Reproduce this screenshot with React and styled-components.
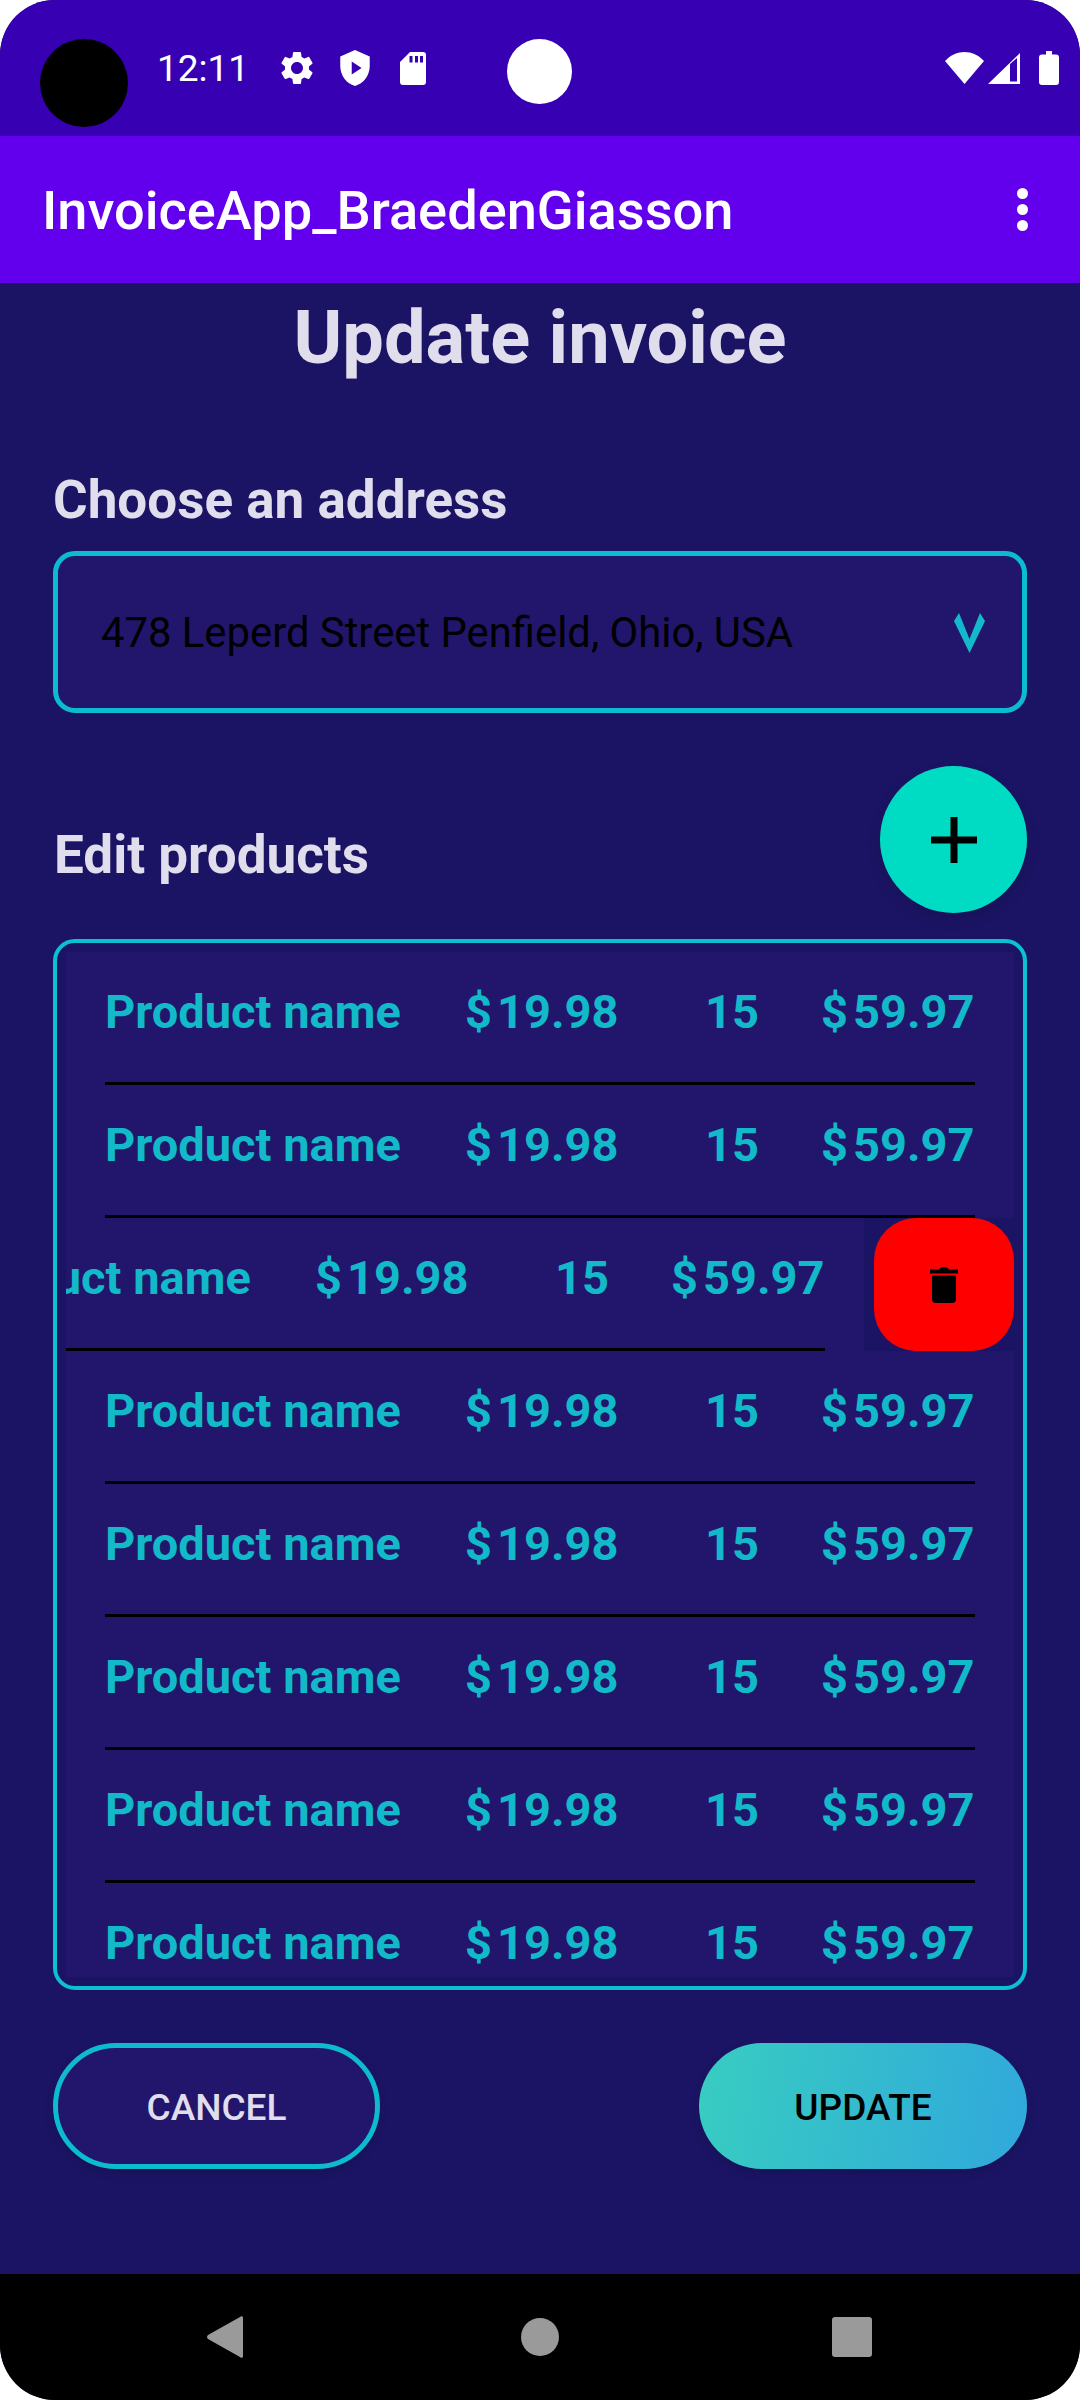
import React from 'react';
import styled, {createGlobalStyle} from 'styled-components';

const GlobalStyle = createGlobalStyle`
  html, body {
    margin: 0;
    background: #fff;
  }
  * {
    box-sizing: border-box;
  }
`;

const products = [0, 0, 150, 0, 0, 0, 0, 0];

const App = () => {
  return (
    <>
      <GlobalStyle/>
      <Screen>
        <StatusBar>
          <Camera/>
          <Blob/>
          <Time>12:11</Time>
          <StatusIcons>
            <svg width="40" height="40" viewBox="0 0 24 24" fill="#fff">
              <path d="M19.14 12.94c.04-.3.06-.61.06-.94 0-.32-.02-.64-.07-.94l2.03-1.58c.18-.14.23-.41.12-.61l-1.92-3.32c-.12-.22-.37-.29-.59-.22l-2.39.96c-.5-.38-1.03-.7-1.62-.94l-.36-2.54c-.04-.24-.24-.41-.48-.41h-3.84c-.24 0-.43.17-.47.41l-.36 2.54c-.59.24-1.13.57-1.62.94l-2.39-.96c-.22-.08-.47 0-.59.22L2.74 8.87c-.12.21-.08.47.12.61l2.03 1.58c-.05.3-.09.63-.09.94s.02.64.07.94l-2.03 1.58c-.18.14-.23.41-.12.61l1.92 3.32c.12.22.37.29.59.22l2.39-.96c.5.38 1.03.7 1.62.94l.36 2.54c.05.24.24.41.48.41h3.84c.24 0 .44-.17.47-.41l.36-2.54c.59-.24 1.13-.56 1.62-.94l2.39.96c.22.08.47 0 .59-.22l1.92-3.32c.12-.22.07-.47-.12-.61l-2.01-1.58zM12 15.6c-1.98 0-3.6-1.62-3.6-3.6s1.62-3.6 3.6-3.6 3.6 1.62 3.6 3.6-1.62 3.6-3.6 3.6z"/>
            </svg>
            <svg width="30" height="36" viewBox="3 1 18 22" fill="#fff">
              <path fillRule="evenodd" d="M12 1 3 5v6c0 5.55 3.84 10.74 9 12 5.16-1.26 9-6.45 9-12V5l-9-4zM10 8l6 4-6 4V8z"/>
            </svg>
            <SdIcon width="26" height="33" viewBox="0 0 26 33" fill="#fff">
              <path fillRule="evenodd" d="M10 0H23a3 3 0 0 1 3 3V30a3 3 0 0 1-3 3H3a3 3 0 0 1-3-3V10L10 0zM9.500 4v6.500h3V4h-3zM15 4v6.500h3V4h-3zM20 4v6.500h3V4h-3z"/>
            </SdIcon>
          </StatusIcons>
          <SystemIcons>
            <svg width="39" height="32" viewBox="0 0 39 32" fill="#fff">
              <path d="M0 9C11-3 28-3 39 9L19.500 32 0 9z"/>
            </svg>
            <svg width="32" height="31" viewBox="0 0 32 31" fill="#fff">
              <path fillRule="evenodd" d="M32 0V31H0L32 0zM29 5 22 11V28.500H29V5z"/>
            </svg>
            <BatteryIcon width="20" height="34" viewBox="0 0 20 34" fill="#fff">
              <path d="M7 0h6v3.500h4a3 3 0 0 1 3 3V31a3 3 0 0 1-3 3H3a3 3 0 0 1-3-3V6.500a3 3 0 0 1 3-3h4V0z"/>
            </BatteryIcon>
          </SystemIcons>
        </StatusBar>

        <AppBar>
          <AppTitle>InvoiceApp_BraedenGiasson</AppTitle>
          <MenuDots>
            <Dot/>
            <Dot/>
            <Dot/>
          </MenuDots>
        </AppBar>

        <Main>
          <PageTitle>Update invoice</PageTitle>

          <AddressLabel>Choose an address</AddressLabel>
          <AddressSelect>
            <AddressText>478 Leperd Street Penfield, Ohio, USA</AddressText>
            <svg width="31" height="40" viewBox="0 0 31 40" fill="#14b8cb">
              <path d="M0 8 5 0 15.500 26 26 0 31 8 15.500 40z"/>
            </svg>
          </AddressSelect>

          <ProductsHeader>
            <ProductsLabel>Edit products</ProductsLabel>
            <AddButton>
              <svg width="46" height="46" viewBox="0 0 46 46" fill="#000">
                <path d="M19.500 0h7v19.500H46v7H26.500V46h-7V26.500H0v-7h19.500z"/>
              </svg>
            </AddButton>
          </ProductsHeader>

          <ProductList>
            <ListInner>
              {products.map((shift, i) => (
                <Row key={i}>
                  <RowBody $shift={shift}>
                    <Cell>Product name</Cell>
                    <Cell><Dollar>$</Dollar>19.98</Cell>
                    <Cell>15</Cell>
                    <Cell><Dollar>$</Dollar>59.97</Cell>
                  </RowBody>
                  {shift > 0 && (
                    <DeleteBack>
                      <DeleteButton>
                        <svg width="28" height="36" viewBox="0 0 28 36" fill="#000">
                          <path d="M9 2.500C10 1 11 0 14 0s4 1 5 2.500h9v4H0v-4h9zM2 8.500h24V32a4 4 0 0 1-4 4H6a4 4 0 0 1-4-4V8.500z"/>
                        </svg>
                      </DeleteButton>
                    </DeleteBack>
                  )}
                </Row>
              ))}
            </ListInner>
          </ProductList>

          <Actions>
            <CancelButton>CANCEL</CancelButton>
            <UpdateButton>UPDATE</UpdateButton>
          </Actions>
        </Main>

        <NavBar>
          <svg width="36" height="42" viewBox="0 0 36 42" fill="#9a9a9a">
            <path d="M36 2v38c0 2-1.500 2.500-3 1L1 23c-1.300-1.200-1.300-2.800 0-4L33 1c1.500-1.500 3-1 3 1z"/>
          </svg>
          <svg width="38" height="38" viewBox="0 0 38 38" fill="#9a9a9a">
            <circle cx="19" cy="19" r="19"/>
          </svg>
          <svg width="40" height="40" viewBox="0 0 40 40" fill="#9a9a9a">
            <rect width="40" height="40" rx="3"/>
          </svg>
        </NavBar>
      </Screen>
    </>
  );
};

const Screen = styled.div`
  display: flex;
  flex-direction: column;
  width: 1080px;
  height: 2400px;
  border-radius: 55px;
  overflow: hidden;
  background-color: #1b1464;
  font-family: Roboto, "Liberation Sans", sans-serif;
`;

const StatusBar = styled.div`
  position: relative;
  display: flex;
  align-items: center;
  flex: 0 0 136px;
  padding: 0 21px 0 157px;
  background-color: #3700b3;
  color: #fff;
`;

const Camera = styled.div`
  position: absolute;
  left: 40px;
  top: 39px;
  width: 88px;
  height: 88px;
  border-radius: 50%;
  background-color: #000;
`;

const Blob = styled.div`
  position: absolute;
  left: 507px;
  top: 39px;
  width: 65px;
  height: 65px;
  border-radius: 50%;
  background-color: #fff;
`;

const Time = styled.span`
  width: 120px;
  padding-top: 2px;
  font-size: 37px;
  line-height: 40px;
`;

const StatusIcons = styled.div`
  display: flex;
  align-items: center;
  gap: 23px;
`;

const SdIcon = styled.svg`
  margin-left: 7px;
`;

const SystemIcons = styled.div`
  display: flex;
  align-items: center;
  gap: 4px;
  margin-left: auto;
`;

const BatteryIcon = styled.svg`
  margin-left: 15px;
`;

const AppBar = styled.header`
  display: flex;
  align-items: center;
  justify-content: space-between;
  flex: 0 0 147px;
  padding: 0 52px 0 42px;
  background-color: #6200ee;
`;

const AppTitle = styled.h1`
  margin: 2px 0 0;
  font-size: 54.2px;
  font-weight: 500;
  line-height: 64px;
  color: #fff;
`;

const MenuDots = styled.div`
  display: flex;
  flex-direction: column;
  gap: 5px;
`;

const Dot = styled.span`
  width: 11px;
  height: 11px;
  border-radius: 50%;
  background-color: #fff;
`;

const Main = styled.main`
  display: flex;
  flex-direction: column;
  flex: 1;
  padding: 16px 53px 0;
`;

const PageTitle = styled.h2`
  margin: 0;
  font-size: 74px;
  font-weight: 700;
  line-height: 78px;
  text-align: center;
  color: #e0ddec;
`;

const AddressLabel = styled.h3`
  margin: 93px 0 21px;
  font-size: 53px;
  font-weight: 700;
  line-height: 60px;
  color: #e0ddec;
`;

const AddressSelect = styled.div`
  display: flex;
  align-items: center;
  justify-content: space-between;
  height: 162px;
  padding: 2px 37px 0 43px;
  border: 5px solid #0dbbce;
  border-radius: 22px;
  background-color: #21166b;
`;

const AddressText = styled.span`
  font-size: 41.8px;
  line-height: 48px;
  color: #000;
`;

const ProductsHeader = styled.div`
  display: flex;
  align-items: flex-end;
  justify-content: space-between;
  margin-top: 53px;
`;

const ProductsLabel = styled.h3`
  margin: 0 0 28px 1px;
  font-size: 53px;
  font-weight: 700;
  line-height: 60px;
  color: #e0ddec;
`;

const AddButton = styled.button`
  display: flex;
  align-items: center;
  justify-content: center;
  width: 147px;
  height: 147px;
  padding: 0;
  border: none;
  border-radius: 50%;
  background-color: #00dcc4;
  box-shadow: 0 6px 14px rgba(0, 0, 0, 0.12);
`;

const ProductList = styled.div`
  height: 1051px;
  margin-top: 26px;
  padding: 9px;
  border: 4px solid #0cc0d2;
  border-radius: 22px;
`;

const ListInner = styled.div`
  height: 100%;
  overflow: hidden;
  background-color: #21166b;
`;

const Row = styled.div`
  position: relative;
  height: 133px;
  padding: 0 39px;
  overflow: hidden;
`;

const RowBody = styled.div`
  display: grid;
  grid-template-columns: 360px 240px 116px 154px;
  align-items: center;
  width: 870px;
  height: 133px;
  margin-left: ${props => -props.$shift}px;
  padding-bottom: 11px;
  border-bottom: 3px solid #000;
`;

const Cell = styled.span`
  font-size: 47px;
  font-weight: 700;
  line-height: 52px;
  white-space: nowrap;
  color: #12b9c8;
`;

const Dollar = styled.span`
  margin-right: 5px;
`;

const DeleteBack = styled.div`
  position: absolute;
  top: 0;
  right: 0;
  bottom: 0;
  width: 150px;
  padding-left: 10px;
  background-color: #1b1464;
`;

const DeleteButton = styled.button`
  display: flex;
  align-items: center;
  justify-content: center;
  width: 140px;
  height: 100%;
  padding: 0;
  border: none;
  border-radius: 42px;
  background-color: #f00;
`;

const Actions = styled.div`
  display: flex;
  justify-content: space-between;
  margin-top: 53px;
`;

const ActionButton = styled.button`
  height: 126px;
  padding: 3px 0 0;
  border-radius: 63px;
  font-family: inherit;
  font-size: 37px;
  font-weight: 500;
  box-shadow: 0 4px 10px rgba(0, 0, 0, 0.14);
`;

const CancelButton = styled(ActionButton)`
  width: 327px;
  border: 5px solid #0dbbce;
  background-color: #21166b;
  color: #e0ddec;
`;

const UpdateButton = styled(ActionButton)`
  width: 328px;
  border: none;
  background: linear-gradient(100deg, #38cdc1, #30a8dc);
  color: #000;
`;

const NavBar = styled.nav`
  display: grid;
  grid-template-columns: 314px 311px 40px;
  align-items: center;
  flex: 0 0 126px;
  padding-left: 207px;
  background-color: #000;
`;

export default App;
